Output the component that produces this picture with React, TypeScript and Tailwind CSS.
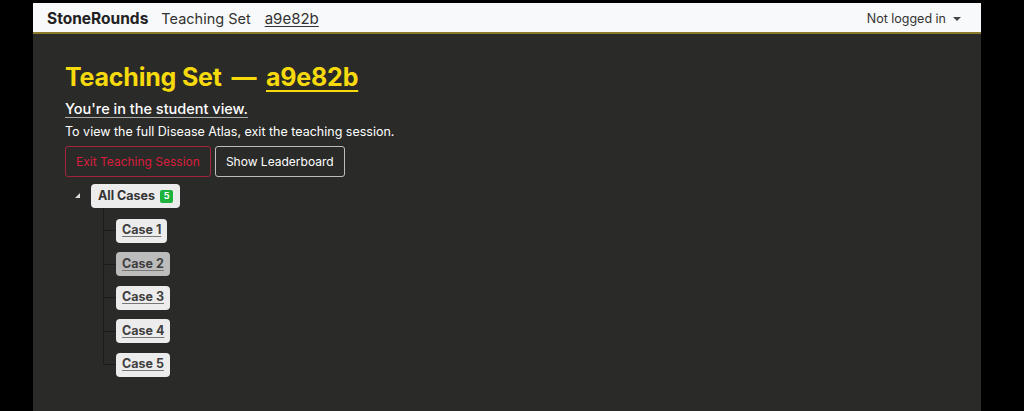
const cases = ['Case 1', 'Case 2', 'Case 3', 'Case 4', 'Case 5'];

function CaseNode({ label, active, last }: { label: string; active?: boolean; last?: boolean }) {
  return (
    <div className="flex h-[33.5px]">
      <div className="w-px flex flex-col">
        <div className="h-1/2 bg-[#1c1c1b]" />
        <div className={last ? 'h-1/2' : 'h-1/2 bg-[#1c1c1b]'} />
      </div>
      <div className="flex items-center">
        <div className="w-[12px] border-t border-[#1c1c1b]" />
        <button
          className={[
            'h-[24px] px-[6px] rounded-[4px] text-[12.5px] font-bold text-[#3f3f3f] underline underline-offset-2 decoration-[#777]',
            active ? 'bg-[#bcbcbc]' : 'bg-[#ececec]',
          ].join(' ')}
        >
          {label}
        </button>
      </div>
    </div>
  );
}

export default function App() {
  return (
    <div
      className="w-[1024px] h-[411px] bg-black pt-[3px] pl-[33px] overflow-hidden"
      style={{ fontFamily: 'Inter, "Noto Sans", sans-serif' }}
    >
      <div className="w-[948px] h-[408px] bg-[#2a2a28] flex flex-col">
        {/* navbar */}
        <div className="h-[31px] shrink-0 bg-[#f8f9fa] border-b-2 border-[#8a7a2a] flex items-center pt-[3px] px-[14px] text-[14.5px] text-[#333]">
          <span className="font-bold text-[15.5px] text-[#222] mr-[13px]">StoneRounds</span>
          <span className="mr-[14px]">Teaching Set</span>
          <span className="text-[15px] underline underline-offset-2">a9e82b</span>
          <div className="ml-auto flex items-center gap-[7px] text-[12.5px] text-[#333] mr-[6px]">
            Not logged in
            <span className="w-0 h-0 border-l-[4px] border-r-[4px] border-t-[4px] border-l-transparent border-r-transparent border-t-[#444]" />
          </div>
        </div>

        <div className="pl-[32px] pt-[28px] text-white">
          <h1 className="text-[25px] font-bold text-[#f7da0c] leading-[30px] tracking-[-0.2px]">
            Teaching Set <span className="mx-[4px]">—</span>{' '}
            <span className="underline underline-offset-[4px]">a9e82b</span>
          </h1>
          <div className="mt-[7px] text-[14.5px] leading-[20px] font-medium underline underline-offset-[3px] decoration-[#aaa]">
            You're in the student view.
          </div>
          <div className="mt-[4px] text-[12.5px] leading-[18px]">
            To view the full Disease Atlas, exit the teaching session.
          </div>
          <div className="mt-[5px] flex gap-[4px]">
            <button className="h-[31px] px-[10px] rounded-[3px] border border-[#a3243a] text-[#d91d3c] text-[12px]">
              Exit Teaching Session
            </button>
            <button className="h-[31px] px-[10px] rounded-[3px] border border-[#bdbdbd] text-white text-[12px]">
              Show Leaderboard
            </button>
          </div>

          {/* tree */}
          <div className="mt-[7px] ml-[9px]">
            <div className="flex items-center h-[24px]">
              <span className="w-0 h-0 ml-[1px] mr-[11px] mt-[-1px] border-l-[5px] border-b-[5px] border-l-transparent border-b-[#dcdcdc]" />
              <button className="h-[24px] px-[7px] rounded-[4px] bg-[#ececec] text-[12.5px] font-bold text-[#333] flex items-center gap-[5px]">
                All Cases
                <span className="bg-[#1eb33c] text-white text-[9px] font-bold rounded-[2px] w-[13px] h-[13px] flex items-center justify-center">
                  5
                </span>
              </button>
            </div>
            <div className="ml-[29px] flex">
              <div className="flex flex-col">
                <div className="h-[6px] w-px bg-[#1c1c1b]" />
                {cases.map((c, i) => (
                  <CaseNode key={c} label={c} active={i === 1} last={i === cases.length - 1} />
                ))}
              </div>
            </div>
          </div>
        </div>
      </div>
    </div>
  );
}
